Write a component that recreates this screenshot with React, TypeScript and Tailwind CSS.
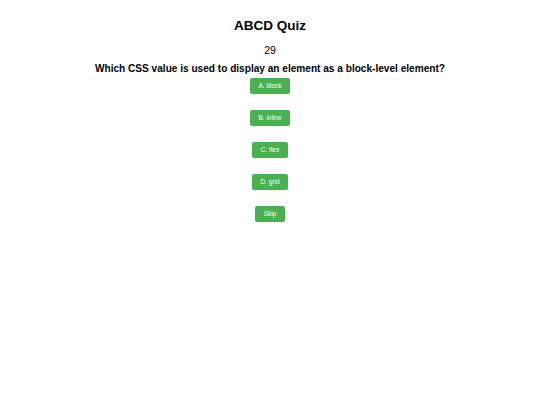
import React from 'react';

const options = ['A. block', 'B. inline', 'C. flex', 'D. grid'];

const btn = "h-[16px] px-[8.5px] bg-[#4caf50] text-white text-[6.5px] rounded-[2px] leading-none";

export default function App() {
  return (
    <div className="min-h-screen bg-white font-['Liberation_Sans',Arial,sans-serif] text-black flex flex-col items-center pt-[17px]">
      <h1 className="text-[13.5px] font-bold leading-[17px]">ABCD Quiz</h1>
      <div className="mt-[10px] text-[10.5px] leading-[12px]">29</div>
      <h2 className="mt-[6px] text-[10.1px] font-bold leading-[14px]">
        Which CSS value is used to display an element as a block-level element?
      </h2>
      <div className="mt-[2px] flex flex-col items-center gap-[16px]">
        {options.map(o => (
          <button key={o} className={btn}>
            {o}
          </button>
        ))}
        <button className={btn}>Skip</button>
      </div>
    </div>
  );
}
